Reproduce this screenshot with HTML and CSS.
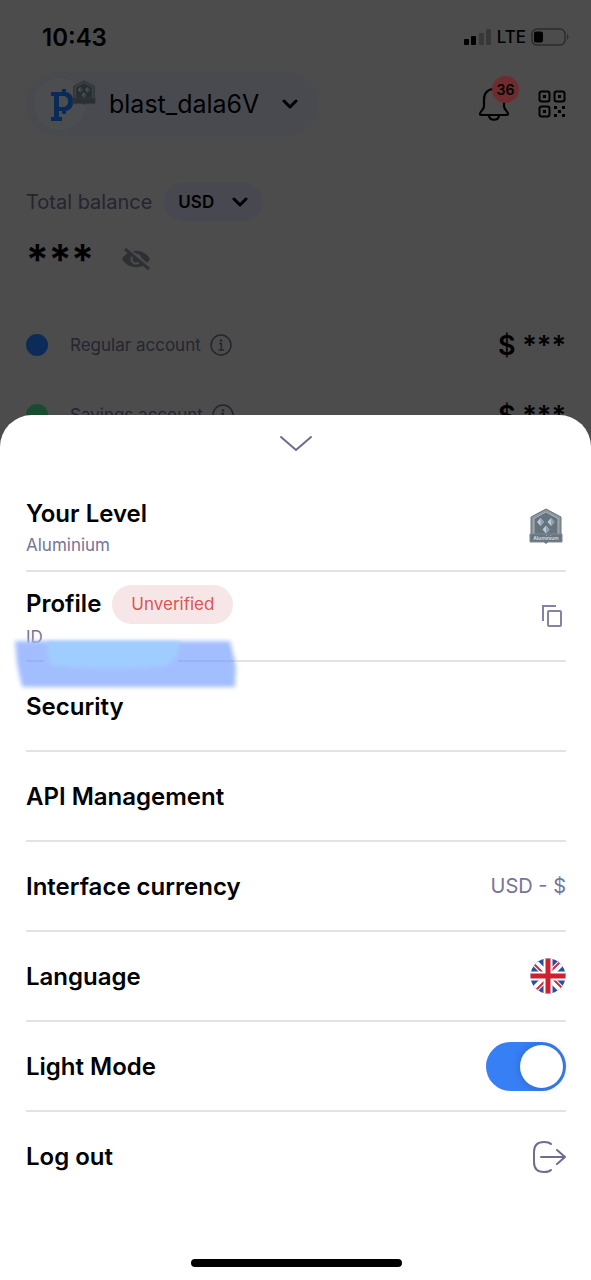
FILE: index.html
```html
<!DOCTYPE html>
<html lang="en">
<head>
    <meta charset="UTF-8">
    <meta name="viewport" content="width=device-width, initial-scale=1.0">
    <title>Account menu</title>
    <link rel="stylesheet" href="styles.css">
</head>
<body>
    <!-- shared icons -->
    <svg class="sprite" aria-hidden="true">
        <symbol id="badge" viewBox="0 0 34 36">
            <path d="M17 1L32 9V27H2V9Z" fill="#8b969e"/>
            <path d="M17 1L32 9V27H2V9Z" fill="none" stroke="#68757e" stroke-width="1"/>
            <path d="M17 4L29 10.500V27H5V10.500Z" fill="#67737d" stroke="#a9b4ba" stroke-width="1"/>
            <path d="M11.500 10l3.500 4-3.500 4-3.500-4zM22 10l3.500 4-3.500 4-3.500-4zM17 17.500l3.500 4-3.500 4-3.500-4z" fill="#b9cbd5"/>
            <path d="M11.500 10l3.500 4-3.500 4zM22 10l3.500 4-3.500 4zM17 17.500l3.500 4-3.500 4z" fill="#8fa3af"/>
            <path d="M1 26H33V34H19L17 35.500L15 34H1Z" fill="#69757e" stroke="#7f8a92" stroke-width="1"/>
        </symbol>
        <symbol id="chevron" viewBox="0 0 16 10">
            <path d="M2 2l6 6 6-6" fill="none" stroke="#000" stroke-width="3" stroke-linecap="round" stroke-linejoin="round"/>
        </symbol>
        <symbol id="info" viewBox="0 0 22 22">
            <circle cx="11" cy="11" r="10" fill="none" stroke="#25252f" stroke-width="1.500"/>
            <circle cx="11" cy="6.500" r="1.300" fill="#25252f"/>
            <path d="M9 9.500h2.300V16M8.500 16h5.500" fill="none" stroke="#25252f" stroke-width="1.500"/>
        </symbol>
    </svg>

    <main class="home">
        <div class="status">
            <span class="time">10:43</span>
            <div class="signal">
                <svg width="28" height="18" viewBox="0 0 28 18">
                    <rect x="0" y="11" width="5" height="6" rx="1" fill="#000"/>
                    <rect x="7" y="8" width="5" height="9" rx="1" fill="#000"/>
                    <rect x="15" y="5" width="5" height="12" rx="1" fill="#383838"/>
                    <rect x="22" y="1" width="5" height="16" rx="1" fill="#383838"/>
                </svg>
                <span>LTE</span>
                <svg width="39" height="18" viewBox="0 0 39 18">
                    <rect x="1" y="1" width="33" height="16" rx="5" fill="none" stroke="#2b2b2b" stroke-width="1.500"/>
                    <rect x="3" y="3.500" width="9" height="11" rx="2" fill="#000"/>
                    <path d="M36 6q3 3 0 6z" fill="#2b2b2b"/>
                </svg>
            </div>
        </div>

        <header class="header">
            <button class="user">
                <span class="avatar">
                    <svg width="52" height="52" viewBox="0 0 52 52">
                        <path d="M17 14h11v-3h4v3c10 2 10 17 0 19v3h-4v-3h-3v6h3v4H17v-4h3V18h-3zM25 18v11h4c7 0 7-11 0-11z" fill="#0b2a57" fill-rule="evenodd"/>
                    </svg>
                    <svg class="avatar-badge" width="24" height="25"><use href="#badge"/></svg>
                </span>
                <span>blast_dala6V</span>
                <svg width="16" height="10"><use href="#chevron"/></svg>
            </button>
            <div class="actions">
                <button class="bell" aria-label="Notifications">
                    <svg width="32" height="36" viewBox="0 0 32 36">
                        <path d="M16 3c-6 0-10 4-10 10v7c0 4-4 5-4 8 0 1 .5 1 2 1h24c1.500 0 2 0 2-1 0-3-4-4-4-8v-7c0-6-4-10-10-10z" fill="none" stroke="#000" stroke-width="2.200" stroke-linejoin="round"/>
                        <path d="M11 30c1 5 9 5 10 0" fill="none" stroke="#000" stroke-width="2.200"/>
                    </svg>
                    <span class="count">36</span>
                </button>
                <button aria-label="QR code">
                    <svg width="28" height="28" viewBox="0 0 28 28">
                        <g fill="none" stroke="#000" stroke-width="2">
                            <rect x="1.500" y="1.500" width="10" height="10" rx="2"/>
                            <rect x="16.500" y="1.500" width="10" height="10" rx="2"/>
                            <rect x="1.500" y="16.500" width="10" height="10" rx="2"/>
                        </g>
                        <path d="M5 5h3v3H5zM20 5h3v3h-3zM5 20h3v3H5zM16 16h3v3h-3zM24 16h3v3h-3zM20 20h3v3h-3zM16 24h3v3h-3zM24 24h3v3h-3z"/>
                    </svg>
                </button>
            </div>
        </header>

        <section class="total">
            <span class="total-label">Total balance</span>
            <button class="currency">USD <svg width="16" height="10"><use href="#chevron"/></svg></button>
        </section>

        <section class="hidden-sum">
            <span class="stars">***</span>
            <button aria-label="Show balance">
                <svg width="30" height="24" viewBox="0 0 30 24">
                    <path d="M1 12C7 1 23 1 29 12C23 23 7 23 1 12z" fill="#2f3034"/>
                    <circle cx="15" cy="12" r="4.500" fill="none" stroke="#4c4c4c" stroke-width="2"/>
                    <path d="M5 0L30 21" stroke="#4c4c4c" stroke-width="3"/>
                    <path d="M4 2L28 22" stroke="#2f3034" stroke-width="3"/>
                </svg>
            </button>
        </section>

        <section class="account">
            <span class="dot blue"></span>
            <span>Regular account</span>
            <svg width="22" height="22"><use href="#info"/></svg>
            <span class="amount">$ ***</span>
        </section>
        <section class="account">
            <span class="dot green"></span>
            <span>Savings account</span>
            <svg width="22" height="22"><use href="#info"/></svg>
            <span class="amount">$ ***</span>
        </section>
    </main>

    <div class="sheet">
        <button class="close" aria-label="Close menu">
            <svg width="34" height="18" viewBox="0 0 34 18">
                <path d="M2 2l15 13L32 2" fill="none" stroke="#6f6c8f" stroke-width="2" stroke-linecap="round" stroke-linejoin="round"/>
            </svg>
        </button>

        <ul class="menu">
            <li class="row">
                <div>
                    <div class="title">Your Level</div>
                    <div class="sub">Aluminium</div>
                </div>
                <svg class="level" width="34" height="36" viewBox="0 0 34 36">
                    <use href="#badge"/>
                    <text x="17" y="32" class="badge-text">Aluminium</text>
                </svg>
            </li>
            <li class="row profile">
                <div>
                    <div class="title">Profile <span class="tag">Unverified</span></div>
                    <div class="sub">ID</div>
                </div>
                <button aria-label="Copy ID">
                    <svg width="24" height="24" viewBox="0 0 24 24" fill="none" stroke="#8582a8" stroke-width="2">
                        <path d="M1 17V2h13"/>
                        <rect x="6" y="7" width="13" height="15" rx="1"/>
                    </svg>
                </button>
                <!-- marker stroke over the ID -->
                <svg class="marker" width="232" height="58" viewBox="0 0 232 58">
                    <defs>
                        <filter id="soft"><feGaussianBlur stdDeviation="2"/></filter>
                    </defs>
                    <path d="M5 7L220 7L226 32L225 53L12 53L7 30Z" fill="#a3befe" filter="url(#soft)"/>
                    <path d="M36 8H170Q168 28 154 32Q100 38 40 31Z" fill="#a0cdff" filter="url(#soft)"/>
                    <path d="M16 27H34M168 27H224" stroke="#8ea7e2"/>
                </svg>
            </li>
            <li class="row">
                <div class="title">Security</div>
            </li>
            <li class="row">
                <div class="title">API Management</div>
            </li>
            <li class="row">
                <div class="title">Interface currency</div>
                <span class="value">USD - $</span>
            </li>
            <li class="row">
                <div class="title">Language</div>
                <svg width="36" height="36" viewBox="0 0 36 36">
                    <defs>
                        <clipPath id="round"><circle cx="18" cy="18" r="17.500"/></clipPath>
                    </defs>
                    <g clip-path="url(#round)">
                        <path d="M0 0h36v36H0z" fill="#2450a4"/>
                        <path d="M0 0L36 36M36 0L0 36" stroke="#fff" stroke-width="7"/>
                        <path d="M3 5L16 18M31 3L18 16M33 31L20 18M5 33L18 20" stroke="#d02b3c" stroke-width="2"/>
                        <path d="M18 0v36M0 18h36" stroke="#fff" stroke-width="9"/>
                        <path d="M18 0v36M0 18h36" stroke="#cc2131" stroke-width="5"/>
                    </g>
                </svg>
            </li>
            <li class="row">
                <label class="title" for="light-mode">Light Mode</label>
                <input class="switch" id="light-mode" type="checkbox" checked>
            </li>
            <li class="row">
                <div class="title">Log out</div>
                <button aria-label="Log out">
                    <svg width="34" height="34" viewBox="0 0 34 34" fill="none" stroke="#6f6c8f" stroke-width="2" stroke-linecap="round" stroke-linejoin="round">
                        <path d="M19 4C17 2 15 2 12 2C5 2 2 5 2 12V22C2 29 5 32 12 32C15 32 17 32 19 30"/>
                        <path d="M9 17H32M25 10L33 17L25 24"/>
                    </svg>
                </button>
            </li>
        </ul>

        <div class="home-bar"></div>
    </div>
</body>
</html>
```

FILE: styles.css
```css
* {
    box-sizing: border-box;
}

body {
    margin: 0;
    height: 100vh;
    overflow: hidden;
    background-color: #4c4c4c;
    font-family: Inter, "Liberation Sans", sans-serif;
    color: #000;
}

button {
    display: flex;
    align-items: center;
    padding: 0;
    border: none;
    background: none;
    color: inherit;
    font: inherit;
}

svg {
    display: block;
    flex-shrink: 0;
}

.sprite {
    position: absolute;
    width: 0;
    height: 0;
}

.badge-text {
    font-size: 5px;
    font-weight: 600;
    fill: #d5dde2;
    text-anchor: middle;
}

/* dimmed screen behind the sheet */
.home {
    padding: 0 25px 0 26px;
}

.status {
    display: flex;
    align-items: center;
    justify-content: space-between;
    height: 72px;
    padding: 2px 0 0 16px;
}

.time {
    font-size: 24px;
    font-weight: 600;
}

.signal {
    display: flex;
    align-items: center;
    gap: 5px;
    margin-right: -4px;
    font-size: 17px;
    font-weight: 500;
}

.header {
    display: flex;
    align-items: center;
    justify-content: space-between;
    height: 64px;
}

.user {
    gap: 23px;
    height: 64px;
    padding: 0 20px 0 8px;
    border-radius: 32px;
    background-color: #484a50;
    font-size: 25px;
}

.avatar {
    position: relative;
    width: 52px;
    height: 52px;
    border-radius: 50%;
    background-color: #4c4d4f;
}

.avatar-badge {
    position: absolute;
    top: 2px;
    right: -10px;
    filter: brightness(0.4);
}

.actions {
    display: flex;
    align-items: center;
    gap: 28px;
}

.bell {
    position: relative;
}

.count {
    position: absolute;
    top: -10px;
    right: -9px;
    width: 27px;
    border-radius: 14px;
    background-color: #6f2c2f;
    font-size: 14px;
    font-weight: 600;
    line-height: 27px;
    text-align: center;
}

.total {
    display: flex;
    align-items: center;
    gap: 12px;
    margin-top: 47px;
    color: #25252f;
    font-size: 20px;
}

.currency {
    gap: 18px;
    height: 38px;
    padding: 0 14px;
    border-radius: 19px;
    background-color: #484950;
    color: #000;
    font-size: 17px;
    font-weight: 600;
}

.hidden-sum {
    display: flex;
    align-items: center;
    gap: 27px;
    height: 76px;
    margin-bottom: 13px;
}

.stars {
    font-size: 42px;
    font-weight: 600;
}

.account {
    display: flex;
    align-items: center;
    gap: 9px;
    height: 70px;
    color: #25252f;
    font-size: 17px;
}

.dot {
    width: 22px;
    height: 22px;
    margin-right: 13px;
    border-radius: 50%;
}

.blue {
    background-color: #0c2b59;
}

.green {
    background-color: #174c31;
}

.amount {
    margin-left: auto;
    color: #000;
    font-size: 27px;
    font-weight: 600;
}

/* bottom sheet */
.sheet {
    position: fixed;
    right: 0;
    bottom: 0;
    left: 0;
    padding: 0 25px 13px 26px;
    border-radius: 32px 32px 0 0;
    background-color: #fff;
}

.close {
    justify-content: center;
    width: 100%;
    height: 57px;
    margin-bottom: 10px;
}

.menu {
    margin: 0;
    padding: 0;
    list-style: none;
}

.row {
    display: flex;
    align-items: center;
    justify-content: space-between;
    height: 90px;
    border-bottom: 2px solid #e3e3e5;
}

.row:last-child {
    border-bottom: none;
}

.title {
    display: flex;
    align-items: center;
    gap: 11px;
    padding-top: 2px;
    font-size: 24px;
    font-weight: 600;
    line-height: 36px;
}

.row:last-child .title {
    padding-top: 0;
}

.sub {
    color: #77749a;
    font-size: 17px;
    line-height: 26px;
}

.level {
    margin-right: 3px;
}

.profile {
    position: relative;
}

.tag {
    padding: 0 19px;
    border-radius: 20px;
    background-color: #f7e6e7;
    color: #df5450;
    font-size: 17px;
    font-weight: 400;
    line-height: 39px;
}

.marker {
    position: absolute;
    top: 62px;
    left: -16px;
}

.value {
    color: #77749a;
    font-size: 20px;
}

.switch {
    appearance: none;
    display: flex;
    justify-content: flex-end;
    width: 80px;
    height: 49px;
    margin: 0;
    padding: 3px;
    border-radius: 25px;
    background-color: #377ff4;
}

.switch::before {
    content: "";
    width: 43px;
    height: 43px;
    border-radius: 50%;
    background-color: #fff;
    box-shadow: 0 0 8px rgba(0, 0, 0, 0.2);
}

.home-bar {
    width: 211px;
    height: 8px;
    margin: 57px auto 0;
    border-radius: 4px;
    background-color: #000;
}
```
